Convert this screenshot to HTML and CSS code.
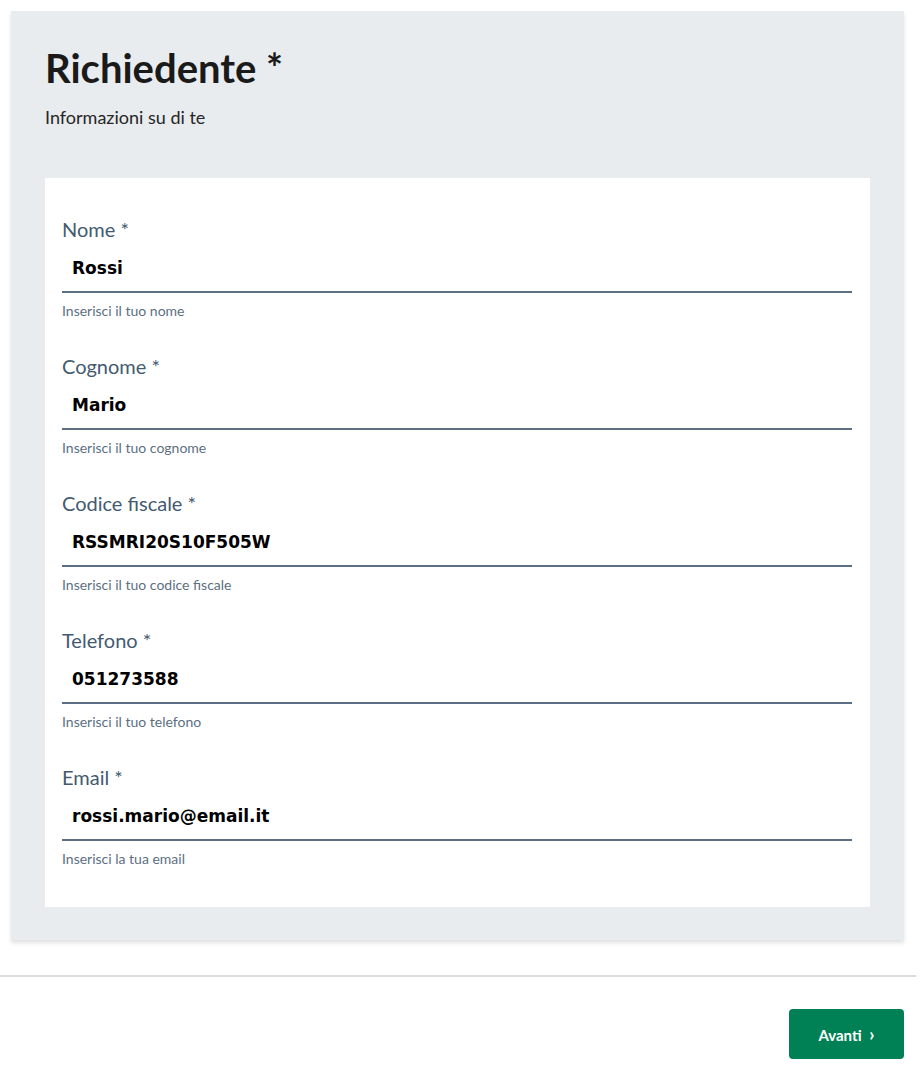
FILE: index.html
```html
<!DOCTYPE html>
<html lang="it">
<head>
  <meta charset="UTF-8" />
  <meta name="viewport" content="width=device-width, initial-scale=1.0"/>
  <title>Richiedente</title>
  <link rel="stylesheet" href="styles.css">
</head>
<body>
  <div class="page">
    <section class="step">
      <h2 class="step-title">Richiedente *</h2>
      <p class="step-sub">Informazioni su di te</p>

      <div class="card">
        <div class="field">
          <label for="nome">Nome *</label>
          <input id="nome" type="text" value="Rossi">
          <small>Inserisci il tuo nome</small>
        </div>
        <div class="field">
          <label for="cognome">Cognome *</label>
          <input id="cognome" type="text" value="Mario">
          <small>Inserisci il tuo cognome</small>
        </div>
        <div class="field">
          <label for="cf">Codice fiscale *</label>
          <input id="cf" type="text" value="RSSMRI20S10F505W">
          <small>Inserisci il tuo codice fiscale</small>
        </div>
        <div class="field">
          <label for="tel">Telefono *</label>
          <input id="tel" type="text" value="051273588">
          <small>Inserisci il tuo telefono</small>
        </div>
        <div class="field">
          <label for="email">Email *</label>
          <input id="email" type="text" value="rossi.mario@email.it">
          <small>Inserisci la tua email</small>
        </div>
      </div>
    </section>

    <div class="actions">
      <button class="btn-next">Avanti <span class="chev">&#8250;</span></button>
    </div>
  </div>
</body>
</html>
```

FILE: styles.css
```css
body {
  margin: 0;
  background-color: #fff;
  font-family: Lato, "Liberation Sans", sans-serif;
  color: #17324d;
}

.page {
  width: 916px;
  padding-top: 11px;
}

.step {
  margin: 0 12px 0 11px;
  padding: 33px 34px 33px;
  background-color: #e9ecef;
  box-shadow: 0 3px 4px rgba(0, 0, 0, 0.12);
}

.step-title {
  margin: 0;
  font-size: 40px;
  line-height: 48px;
  font-weight: 700;
  color: #1a1a1a;
}

.step-sub {
  margin: 13px 0 0;
  font-size: 18px;
  line-height: 24px;
  color: #262626;
}

.card {
  margin-top: 49px;
  background-color: #fff;
  padding: 39px 18px 39px 17px;
  display: flex;
  flex-direction: column;
  gap: 34px;
}

.field {
  display: flex;
  flex-direction: column;
}

.field label {
  font-size: 20px;
  line-height: 24px;
  color: #435a70;
}

.field input {
  margin-top: 4px;
  height: 46px;
  padding: 0 10px;
  border: none;
  border-bottom: 2px solid #5c6f82;
  font-family: "DejaVu Sans", Verdana, sans-serif;
  font-size: 17px;
  font-weight: 700;
  color: #000;
  background: transparent;
  outline: none;
}

.field small {
  margin-top: 9px;
  font-size: 14px;
  line-height: 18px;
  color: #5c6f82;
}

.actions {
  margin-top: 35px;
  border-top: 2px solid #dcdcdc;
  padding: 32px 12px 9px 0;
  display: flex;
  justify-content: flex-end;
}

.btn-next {
  width: 115px;
  height: 50px;
  border: none;
  border-radius: 4px;
  background-color: #008055;
  color: #fff;
  font-family: Lato, sans-serif;
  font-size: 15px;
  font-weight: 700;
  cursor: pointer;
}

.chev {
  margin-left: 4px;
  font-size: 18px;
}
```
